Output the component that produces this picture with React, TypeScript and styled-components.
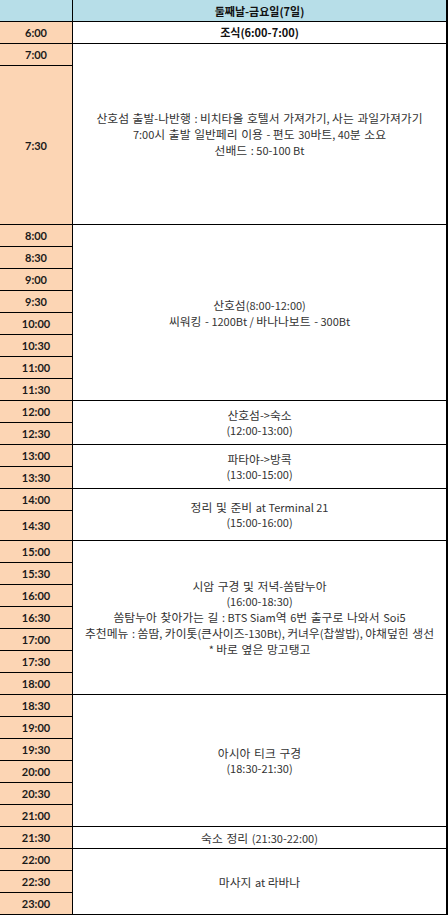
import styled, { createGlobalStyle } from 'styled-components';

const GlobalStyle = createGlobalStyle`
  html, body {
    margin: 0;
    padding: 0;
    background: #ffffff;
  }
`;

const times = [
  '6:00', '7:00', '7:30', '8:00', '8:30', '9:00', '9:30', '10:00', '10:30',
  '11:00', '11:30', '12:00', '12:30', '13:00', '13:30', '14:00', '14:30',
  '15:00', '15:30', '16:00', '16:30', '17:00', '17:30', '18:00', '18:30',
  '19:00', '19:30', '20:00', '20:30', '21:00', '21:30', '22:00', '22:30', '23:00',
];

// row heights in px, border included
const rowHeight = (t: string) => (t === '7:30' ? 159 : t === '14:30' ? 30 : 22);

type Activity = { start: number; span: number; lines: string[]; bold?: boolean };

const activities: Activity[] = [
  { start: 0, span: 1, lines: ['조식(6:00-7:00)'], bold: true },
  {
    start: 1,
    span: 2,
    lines: [
      '산호섬 출발-나반행 : 비치타올 호텔서 가져가기, 사는 과일가져가기',
      '7:00시 출발 일반페리 이용 - 편도 30바트, 40분 소요',
      '선배드 : 50-100 Bt',
    ],
  },
  { start: 3, span: 8, lines: ['산호섬(8:00-12:00)', '씨워킹 - 1200Bt / 바나나보트 - 300Bt'] },
  { start: 11, span: 2, lines: ['산호섬->숙소', '(12:00-13:00)'] },
  { start: 13, span: 2, lines: ['파타야->방콕', '(13:00-15:00)'] },
  { start: 15, span: 2, lines: ['정리 및 준비 at Terminal 21', '(15:00-16:00)'] },
  {
    start: 17,
    span: 7,
    lines: [
      '시암 구경 및 저녁-쏨탐누아',
      '(16:00-18:30)',
      '쏨탐누아 찾아가는 길 : BTS Siam역 6번 출구로 나와서 Soi5',
      '추천메뉴 : 쏨땀, 카이톳(큰사이즈-130Bt), 커녀우(찹쌀밥), 야채덮힌 생선',
      '* 바로 옆은 망고탱고',
    ],
  },
  { start: 24, span: 6, lines: ['아시아 티크 구경', '(18:30-21:30)'] },
  { start: 30, span: 1, lines: ['숙소 정리 (21:30-22:00)'] },
  { start: 31, span: 3, lines: ['마사지 at 라바나'] },
];

const Sheet = styled.div<{ $rows: string }>`
  width: 448px;
  display: grid;
  grid-template-columns: 73px 375px;
  grid-template-rows: ${(p) => p.$rows};
  font-family: 'Noto Sans CJK KR', 'Noto Sans', sans-serif;
`;

const HeaderCell = styled.div<{ $col: number }>`
  grid-column: ${(p) => p.$col};
  grid-row: 1;
  box-sizing: border-box;
  background: #b7dee8;
  border-right: ${(p) => (p.$col === 1 ? '1px' : '2px')} solid #000;
  border-bottom: 1px solid #000;
  display: flex;
  align-items: center;
  justify-content: center;
  font-size: 11px;
  font-weight: 700;
  color: #111;
`;

const TimeCell = styled.div<{ $row: number }>`
  grid-column: 1;
  grid-row: ${(p) => p.$row};
  box-sizing: border-box;
  background: #fcd5b4;
  border-right: 1px solid #000;
  border-bottom: 1px solid #000;
  display: flex;
  align-items: center;
  justify-content: center;
  font-family: Lato, 'Liberation Sans', sans-serif;
  font-size: 11px;
  font-weight: 700;
  color: #1a1a1a;
`;

const ActivityCell = styled.div<{ $start: number; $span: number; $bold?: boolean }>`
  grid-column: 2;
  grid-row: ${(p) => `${p.$start + 2} / span ${p.$span}`};
  box-sizing: border-box;
  border-right: 2px solid #000;
  border-bottom: 1px solid #000;
  display: flex;
  flex-direction: column;
  align-items: center;
  justify-content: center;
  text-align: center;
  font-size: 11px;
  line-height: 15px;
  font-weight: ${(p) => (p.$bold ? 700 : 400)};
  color: ${(p) => (p.$bold ? '#111' : '#333')};
  white-space: nowrap;
`;

const Line = styled.span`
  display: block;
`;

// the sheet's hangul runs wider than its latin text
const Hangul = styled.span`
  font-size: 11.8px;
  word-spacing: 1px;
`;

const splitHangul = (text: string) =>
  text.split(/([\uAC00-\uD7A3][\uAC00-\uD7A3\s]*)/).filter(Boolean);

function CellLine({ text }: { text: string }) {
  return (
    <Line>
      {splitHangul(text).map((part, i) =>
        /[\uAC00-\uD7A3]/.test(part) ? <Hangul key={i}>{part}</Hangul> : part
      )}
    </Line>
  );
}

export default function App() {
  const rows = ['22px', ...times.map((t) => `${rowHeight(t)}px`)].join(' ');
  return (
    <>
      <GlobalStyle />
      <Sheet $rows={rows}>
        <HeaderCell $col={1} />
        <HeaderCell $col={2}>둘째날-금요일(7일)</HeaderCell>
        {times.map((t, i) => (
          <TimeCell key={t} $row={i + 2}>
            {t}
          </TimeCell>
        ))}
        {activities.map((a) => (
          <ActivityCell key={a.start} $start={a.start} $span={a.span} $bold={a.bold}>
            {a.lines.map((l) =>
              a.bold ? <Line key={l}>{l}</Line> : <CellLine key={l} text={l} />
            )}
          </ActivityCell>
        ))}
      </Sheet>
    </>
  );
}
